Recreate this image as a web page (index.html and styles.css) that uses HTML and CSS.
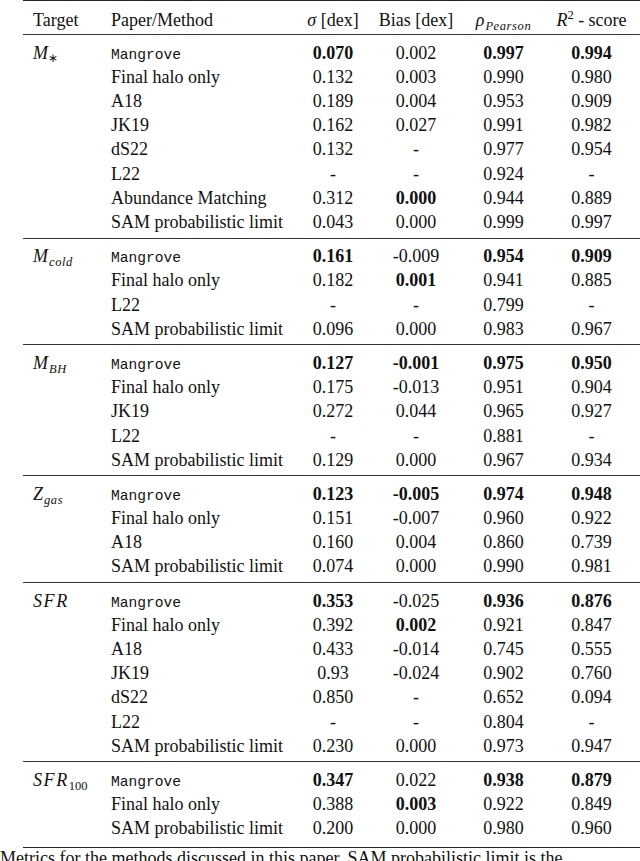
FILE: index.html
```html
<!DOCTYPE html>
<html lang="en">
<head>
<meta charset="utf-8">
<title>Metrics table</title>
<link rel="stylesheet" href="styles.css">
</head>
<body>
<div class="table">
  <div class="grid head">
    <div class="c l">Target</div>
    <div class="c l">Paper/Method</div>
    <div class="c n"><i>σ</i> [dex]</div>
    <div class="c n">Bias [dex]</div>
    <div class="c n"><i>ρ</i><sub class="isub">Pearson</sub></div>
    <div class="c n"><i>R</i><sup>2</sup> - score</div>
  </div>

  <div class="grid section">
    <div class="c l"><i>M</i><sub class="star">∗</sub></div><div class="c l"><span class="mono">Mangrove</span></div><div class="c n b">0.070</div><div class="c n">0.002</div><div class="c n b">0.997</div><div class="c n b">0.994</div>
    <div class="c l"></div><div class="c l">Final halo only</div><div class="c n">0.132</div><div class="c n">0.003</div><div class="c n">0.990</div><div class="c n">0.980</div>
    <div class="c l"></div><div class="c l">A18</div><div class="c n">0.189</div><div class="c n">0.004</div><div class="c n">0.953</div><div class="c n">0.909</div>
    <div class="c l"></div><div class="c l">JK19</div><div class="c n">0.162</div><div class="c n">0.027</div><div class="c n">0.991</div><div class="c n">0.982</div>
    <div class="c l"></div><div class="c l">dS22</div><div class="c n">0.132</div><div class="c n">-</div><div class="c n">0.977</div><div class="c n">0.954</div>
    <div class="c l"></div><div class="c l">L22</div><div class="c n">-</div><div class="c n">-</div><div class="c n">0.924</div><div class="c n">-</div>
    <div class="c l"></div><div class="c l">Abundance Matching</div><div class="c n">0.312</div><div class="c n b">0.000</div><div class="c n">0.944</div><div class="c n">0.889</div>
    <div class="c l"></div><div class="c l">SAM probabilistic limit</div><div class="c n">0.043</div><div class="c n">0.000</div><div class="c n">0.999</div><div class="c n">0.997</div>
  </div>

  <div class="grid section">
    <div class="c l"><i>M</i><sub class="isub">cold</sub></div><div class="c l"><span class="mono">Mangrove</span></div><div class="c n b">0.161</div><div class="c n">-0.009</div><div class="c n b">0.954</div><div class="c n b">0.909</div>
    <div class="c l"></div><div class="c l">Final halo only</div><div class="c n">0.182</div><div class="c n b">0.001</div><div class="c n">0.941</div><div class="c n">0.885</div>
    <div class="c l"></div><div class="c l">L22</div><div class="c n">-</div><div class="c n">-</div><div class="c n">0.799</div><div class="c n">-</div>
    <div class="c l"></div><div class="c l">SAM probabilistic limit</div><div class="c n">0.096</div><div class="c n">0.000</div><div class="c n">0.983</div><div class="c n">0.967</div>
  </div>

  <div class="grid section">
    <div class="c l"><i>M</i><sub class="isub">BH</sub></div><div class="c l"><span class="mono">Mangrove</span></div><div class="c n b">0.127</div><div class="c n b">-0.001</div><div class="c n b">0.975</div><div class="c n b">0.950</div>
    <div class="c l"></div><div class="c l">Final halo only</div><div class="c n">0.175</div><div class="c n">-0.013</div><div class="c n">0.951</div><div class="c n">0.904</div>
    <div class="c l"></div><div class="c l">JK19</div><div class="c n">0.272</div><div class="c n">0.044</div><div class="c n">0.965</div><div class="c n">0.927</div>
    <div class="c l"></div><div class="c l">L22</div><div class="c n">-</div><div class="c n">-</div><div class="c n">0.881</div><div class="c n">-</div>
    <div class="c l"></div><div class="c l">SAM probabilistic limit</div><div class="c n">0.129</div><div class="c n">0.000</div><div class="c n">0.967</div><div class="c n">0.934</div>
  </div>

  <div class="grid section">
    <div class="c l"><i>Z</i><sub class="isub">gas</sub></div><div class="c l"><span class="mono">Mangrove</span></div><div class="c n b">0.123</div><div class="c n b">-0.005</div><div class="c n b">0.974</div><div class="c n b">0.948</div>
    <div class="c l"></div><div class="c l">Final halo only</div><div class="c n">0.151</div><div class="c n">-0.007</div><div class="c n">0.960</div><div class="c n">0.922</div>
    <div class="c l"></div><div class="c l">A18</div><div class="c n">0.160</div><div class="c n">0.004</div><div class="c n">0.860</div><div class="c n">0.739</div>
    <div class="c l"></div><div class="c l">SAM probabilistic limit</div><div class="c n">0.074</div><div class="c n">0.000</div><div class="c n">0.990</div><div class="c n">0.981</div>
  </div>

  <div class="grid section">
    <div class="c l"><i class="sfr">SFR</i></div><div class="c l"><span class="mono">Mangrove</span></div><div class="c n b">0.353</div><div class="c n">-0.025</div><div class="c n b">0.936</div><div class="c n b">0.876</div>
    <div class="c l"></div><div class="c l">Final halo only</div><div class="c n">0.392</div><div class="c n b">0.002</div><div class="c n">0.921</div><div class="c n">0.847</div>
    <div class="c l"></div><div class="c l">A18</div><div class="c n">0.433</div><div class="c n">-0.014</div><div class="c n">0.745</div><div class="c n">0.555</div>
    <div class="c l"></div><div class="c l">JK19</div><div class="c n">0.93</div><div class="c n">-0.024</div><div class="c n">0.902</div><div class="c n">0.760</div>
    <div class="c l"></div><div class="c l">dS22</div><div class="c n">0.850</div><div class="c n">-</div><div class="c n">0.652</div><div class="c n">0.094</div>
    <div class="c l"></div><div class="c l">L22</div><div class="c n">-</div><div class="c n">-</div><div class="c n">0.804</div><div class="c n">-</div>
    <div class="c l"></div><div class="c l">SAM probabilistic limit</div><div class="c n">0.230</div><div class="c n">0.000</div><div class="c n">0.973</div><div class="c n">0.947</div>
  </div>

  <div class="grid section last">
    <div class="c l"><i class="sfr">SFR</i><sub class="rsub">100</sub></div><div class="c l"><span class="mono">Mangrove</span></div><div class="c n b">0.347</div><div class="c n">0.022</div><div class="c n b">0.938</div><div class="c n b">0.879</div>
    <div class="c l"></div><div class="c l">Final halo only</div><div class="c n">0.388</div><div class="c n b">0.003</div><div class="c n">0.922</div><div class="c n">0.849</div>
    <div class="c l"></div><div class="c l">SAM probabilistic limit</div><div class="c n">0.200</div><div class="c n">0.000</div><div class="c n">0.980</div><div class="c n">0.960</div>
  </div>
</div>
<p class="caption">Metrics for the methods discussed in this paper. SAM probabilistic limit is the theoretical best</p>
</body>
</html>
```

FILE: styles.css
```css
html, body {
  margin: 0;
  padding: 0;
  overflow: hidden;
  background: #ffffff;
}

body {
  font-family: "Liberation Serif", "Times New Roman", serif;
  font-size: 18px;
  color: #111111;
}

.table {
  margin-left: 23px;
  width: 617px;
  border-top: 1.6px solid #222222;
  border-bottom: 1.8px solid #222222;
}

.grid {
  display: grid;
  grid-template-columns: 78px 197px 70px 96px 79px 97px;
  grid-auto-rows: 24.2px;
}

.head {
  padding: 6.5px 0 2.5px;
}

.section {
  border-top: 1px solid #333333;
  padding: 5.5px 0 3.5px;
}

.section.last {
  padding-bottom: 6px;
}

.c {
  line-height: 24.2px;
  white-space: nowrap;
}

.l {
  padding-left: 10px;
  text-align: left;
}

.n {
  text-align: center;
}

.b {
  font-weight: bold;
}

.mono {
  font-family: "Liberation Mono", "Courier New", monospace;
  font-size: 14.6px;
}

i {
  font-style: italic;
}

sub, sup {
  line-height: 0;
  position: relative;
  vertical-align: baseline;
}

.isub {
  font-style: italic;
  font-size: 12.5px;
  top: 4px;
  letter-spacing: 0.6px;
  margin-left: 1px;
}

.rsub {
  font-size: 12.5px;
  top: 4px;
  margin-left: 0;
}

.star {
  font-size: 12px;
  top: 3px;
}

sup {
  font-size: 12.5px;
  top: -7px;
}

.sfr {
  letter-spacing: 1.6px;
}

.caption {
  margin: 0;
  font-size: 18px;
  line-height: 20px;
}
```
